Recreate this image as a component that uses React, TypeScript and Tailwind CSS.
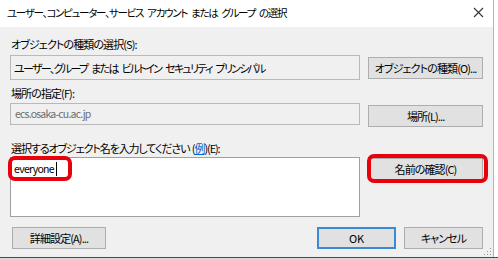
import React from "react";

const btn =
  "h-[22px] w-[115px] flex items-center justify-center bg-[#e1e1e1] border border-[#adadad] whitespace-nowrap";

export default function App() {
  return (
    <div className="w-[498px] h-[260px] bg-white relative overflow-hidden font-['Noto_Sans_CJK_JP','Noto_Sans',sans-serif] [font-feature-settings:'palt'] text-[11px] leading-[14px] tracking-[-0.9px] [word-spacing:3px] text-black">
      <div className="w-[494px] h-[257px] flex flex-col border-r border-[#b4b4b4]">
        {/* title bar */}
        <div className="h-[27px] bg-white flex items-center justify-between pl-[7px] pr-[9px] pb-[2px]">
          <span className="whitespace-nowrap text-[10.5px] tracking-[-1.3px]">ユーザー、コンピューター、サービス アカウント または グループ の選択</span>
          <svg width="11" height="11" viewBox="0 0 11 11" className="text-[#333]">
            <path d="M1 1 L10 10 M10 1 L1 10" stroke="currentColor" strokeWidth="1.1" />
          </svg>
        </div>
        {/* body */}
        <div className="flex-1 bg-[#f0f0f0] flex flex-col pl-[10px] pr-[10px] relative">
          <div className="mt-[10px] h-[14px] pl-[1px]">オブジェクトの種類の選択(S):</div>
          <div className="mt-[4px] flex items-start gap-[8px]">
            <div className="w-[351px] h-[25px] border border-[#b9b9b9] bg-[#f0f0f0] flex items-center pl-[3px] whitespace-nowrap tracking-[-1.7px]">
              ユーザー、グループ または ビルトイン セキュリティ プリンシパル
            </div>
            <div className={btn + " mt-[2px]"}>オブジェクトの種類(O)...</div>
          </div>

          <div className="mt-[6px] h-[14px] pl-[1px]">場所の指定(F):</div>
          <div className="mt-[3px] flex items-start gap-[8px]">
            <div className="w-[351px] h-[22px] border border-[#b9b9b9] bg-[#f0f0f0] flex items-center pl-[4px] text-[#6d6d6d] text-[10.5px] tracking-[-0.8px]">
              ecs.osaka-cu.ac.jp
            </div>
            <div className={btn + " mt-[2px]"}>場所(L)...</div>
          </div>

          <div className="mt-[14px] h-[14px] pl-[1px] whitespace-nowrap tracking-[-1.1px] [word-spacing:1px]">
            選択するオブジェクト名を入力してください (<span className="text-[#0066cc] underline">例</span>)(E):
          </div>
          <div className="mt-[2px] flex items-start gap-[8px]">
            <div className="relative w-[351px] h-[60px] bg-white border border-[#a0a0a0] pl-[3px] pt-[4px] text-[10.5px] tracking-[-0.7px]">
              <span className="inline-flex items-center">
                everyone
                <span className="inline-block w-px h-[14px] bg-black ml-[2px]" />
              </span>
              <div className="absolute left-[-3px] top-[-2px] w-[64px] h-[25px] border-[4px] border-[#e8000b] rounded-[7px]" />
            </div>
            <div className="relative mt-[1px]">
              <div className={btn}>名前の確認(C)</div>
              <div className="absolute left-[-1px] top-[-4px] w-[121px] h-[29px] border-[4px] border-[#e8000b] rounded-[7px]" />
            </div>
          </div>

          <div className="mt-[10px] flex items-start">
            <div className="h-[22px] w-[94px] ml-[2px] flex items-center justify-center bg-[#e1e1e1] border border-[#adadad]">
              詳細設定(A)...
            </div>
            <div className="flex-1" />
            <div className="h-[22px] w-[79px] flex items-center justify-center bg-[#e1e1e1] border-2 border-[#3a8ad6] tracking-[-0.2px]">
              OK
            </div>
            <div className="h-[22px] w-[79px] ml-[8px] flex items-center justify-center bg-[#e1e1e1] border border-[#adadad]">
              キャンセル
            </div>
          </div>

          {/* resize grip */}
          <svg className="absolute right-[1px] bottom-[1px]" width="8" height="8" viewBox="0 0 8 8">
            <rect x="6" y="0" width="1" height="1" fill="#9a9a9a" />
            <rect x="3" y="3" width="1" height="1" fill="#9a9a9a" />
            <rect x="6" y="3" width="1" height="1" fill="#9a9a9a" />
            <rect x="0" y="6" width="1" height="1" fill="#9a9a9a" />
            <rect x="3" y="6" width="1" height="1" fill="#9a9a9a" />
            <rect x="6" y="6" width="1" height="1" fill="#9a9a9a" />
          </svg>
        </div>
      </div>
      <div className="h-px w-full bg-[#4a4a4a]" />
      <div className="h-[2px] w-full bg-[#d8d8d8]" />
    </div>
  );
}
